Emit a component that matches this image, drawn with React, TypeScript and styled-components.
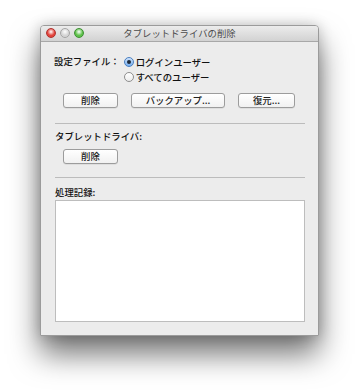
import React from 'react'
import styled, {createGlobalStyle} from 'styled-components'

const Global = createGlobalStyle`
  html, body {
    margin: 0;
    padding: 0;
    background: #ffffff;
  }
  body {
    font-family: "Noto Sans CJK JP", "Noto Sans", sans-serif;
  }
`

const Page = styled.div`
  width: 359px;
  height: 392px;
  padding: 25px 0 0 40px;
  box-sizing: border-box;
`

const Window = styled.div`
  width: 279px;
  height: 311px;
  display: flex;
  flex-direction: column;
  background: #ececec;
  border: 1px solid #9b9b9b;
  border-radius: 4px 4px 1px 1px;
  box-sizing: border-box;
  box-shadow:
    0 18px 30px rgba(0, 0, 0, 0.55),
    0 0 14px rgba(0, 0, 0, 0.2);
  overflow: hidden;
`

const TitleBar = styled.div`
  position: relative;
  height: 15px;
  flex: none;
  display: flex;
  align-items: center;
  justify-content: center;
  background: linear-gradient(#ececec, #d2d2d2);
  border-bottom: 1px solid #a8a8a8;
`

const Lights = styled.div`
  position: absolute;
  left: 5px;
  top: 2px;
  display: flex;
  gap: 4px;
`

const Light = styled.span<{$c: string; $edge: string}>`
  width: 10px;
  height: 10px;
  border-radius: 50%;
  box-sizing: border-box;
  border: 1px solid ${(p) => p.$edge};
  background: radial-gradient(circle at 50% 35%, #ffffff 0%, ${(p) => p.$c} 55%);
`

const Title = styled.span`
  font-size: 9.4px;
  color: #4a4a4a;
  line-height: 15px;
`

const Body = styled.div`
  flex: 1;
  display: flex;
  flex-direction: column;
  padding: 12px 13px 13px 13px;
  font-size: 9.4px;
  font-weight: 500;
  color: #111;
`

const Setting = styled.div`
  display: flex;
  align-items: flex-start;
`

const Label = styled.span`
  line-height: 15px;
  white-space: nowrap;
`

const RadioGroup = styled.div`
  display: flex;
  flex-direction: column;
  margin-left: 4px;
`

const RadioRow = styled.label`
  display: flex;
  align-items: center;
  gap: 2px;
  height: 15px;
`

const RadioDot = styled.span<{$on?: boolean}>`
  width: 10px;
  height: 10px;
  border-radius: 50%;
  box-sizing: border-box;
  display: flex;
  align-items: center;
  justify-content: center;
  border: 1px solid ${(p) => (p.$on ? '#4a7fc0' : '#8e8e8e')};
  background: ${(p) =>
    p.$on
      ? 'linear-gradient(#cfe3fb, #74aef0)'
      : 'linear-gradient(#ffffff, #ececec)'};

  &::after {
    content: '';
    display: ${(p) => (p.$on ? 'block' : 'none')};
    width: 4px;
    height: 4px;
    border-radius: 50%;
    background: #1d2a3a;
  }
`

const ButtonRow = styled.div<{$top: number}>`
  display: flex;
  gap: 13px;
  margin: ${(p) => p.$top}px 0 0 9px;
`

const Button = styled.button<{$w: number}>`
  width: ${(p) => p.$w}px;
  height: 15px;
  padding: 0;
  font-family: inherit;
  font-size: 9.4px;
  font-weight: 500;
  line-height: 13px;
  color: #222;
  border: 1px solid #9c9c9c;
  border-radius: 3px;
  background: linear-gradient(#ffffff, #f1f1f1);
  box-shadow: 0 0.5px 0 rgba(0, 0, 0, 0.12);
`

const Separator = styled.hr<{$top: number}>`
  margin: ${(p) => p.$top}px 0 0 1px;
  border: none;
  height: 1px;
  background: #bcbcbc;
`

const SectionLabel = styled(Label)<{$top: number}>`
  display: block;
  margin-top: ${(p) => p.$top}px;
  margin-left: 1px;
`

const Log = styled.div`
  margin: 0 0 0 1px;
  flex: 1;
  background: #ffffff;
  border: 1px solid #bdbdbd;
  box-sizing: border-box;
`

export default function App() {
  return (
    <Page>
      <Global />
      <Window>
        <TitleBar>
          <Lights>
            <Light $c="#e2443c" $edge="#b1302c" />
            <Light $c="#d5d5d5" $edge="#a5a5a5" />
            <Light $c="#5fc24b" $edge="#3d8f33" />
          </Lights>
          <Title>タブレットドライバの削除</Title>
        </TitleBar>
        <Body>
          <Setting>
            <Label>設定ファイル：</Label>
            <RadioGroup>
              <RadioRow>
                <RadioDot $on />
                ログインユーザー
              </RadioRow>
              <RadioRow>
                <RadioDot />
                すべてのユーザー
              </RadioRow>
            </RadioGroup>
          </Setting>
          <ButtonRow $top={9}>
            <Button $w={55}>削除</Button>
            <Button $w={94}>バックアップ...</Button>
            <Button $w={57}>復元...</Button>
          </ButtonRow>
          <Separator $top={15} />
          <SectionLabel $top={5}>タブレットドライバ:</SectionLabel>
          <ButtonRow $top={5}>
            <Button $w={55}>削除</Button>
          </ButtonRow>
          <Separator $top={13} />
          <SectionLabel $top={7}>処理記録:</SectionLabel>
          <Log />
        </Body>
      </Window>
    </Page>
  )
}
